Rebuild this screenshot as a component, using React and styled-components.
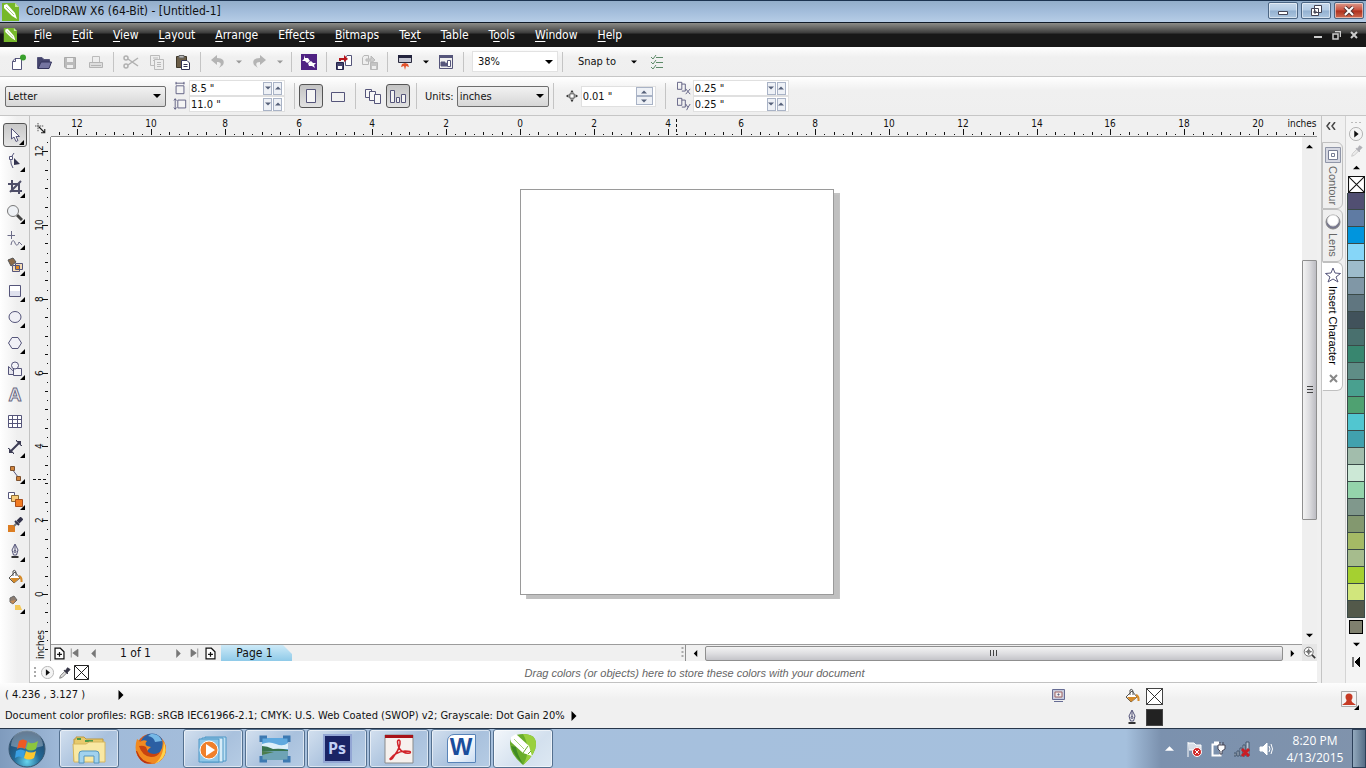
import React from "react";
import styled, { createGlobalStyle, css } from "styled-components";

const INCH = 36.9;

const GlobalStyle = createGlobalStyle`
  * {
    box-sizing: border-box;
  }
  body {
    margin: 0;
    background: #f0f0f0;
    color: #111;
    font-family: "DejaVu Sans Condensed", "DejaVu Sans", sans-serif;
    font-size: 11px;
  }
  button, input, select {
    font: inherit;
    color: inherit;
    margin: 0;
    padding: 0;
    border: 0;
    background: none;
    border-radius: 0;
  }
  svg {
    display: block;
    flex: none;
  }
`;

const Window = styled.div`
  display: flex;
  flex-direction: column;
  min-height: 100vh;
`;

const TitleBar = styled.header`
  display: flex;
  align-items: center;
  height: 23px;
  padding: 0 2px 0 1px;
  gap: 7px;
  border-top: 1px solid #1c3350;
  border-bottom: 1px solid #101a28;
  background: linear-gradient(#93aeca, #a3bddb 50%, #b6cde6);
`;

const Title = styled.h1`
  flex: 1;
  margin: 0;
  font-size: 12px;
  font-weight: normal;
  line-height: 18px;
  padding-bottom: 2px;
`;

const WindowButtons = styled.div`
  display: flex;
  align-self: flex-start;
  gap: 3px;
  padding-top: 1px;
`;

const WindowButton = styled.button`
  display: flex;
  align-items: center;
  justify-content: center;
  width: 30px;
  height: 17px;
  border: 1px solid #4c6684;
  border-radius: 2px;
  box-shadow: inset 0 0 0 1px rgba(255, 255, 255, 0.5);
  background: ${(p) =>
    p.$close
      ? "linear-gradient(#dc9a8c, #c9513f 48%, #ae2f1c 52%, #cf6a50)"
      : "linear-gradient(#c6d8eb, #b2cae3 48%, #92b0d0 52%, #aec7e0)"};
`;

const MenuBar = styled.nav`
  display: flex;
  align-items: center;
  height: 24px;
  padding: 0 8px 0 3px;
  background: linear-gradient(#8c8c88, #5c5c5a 26%, #3a3a3a 42%, #181818 46%, #181818);
  color: #fff;
`;

const Menus = styled.div`
  display: flex;
  flex: 1;
  padding-left: 7px;
`;

const MenuButton = styled.button`
  padding: 0 10px;
  font-size: 12px;
  line-height: 22px;
  u {
    text-underline-offset: 2px;
  }
`;

const ChildButtons = styled.div`
  display: flex;
  gap: 9px;
  color: #ddd;
`;

const PlainButton = styled.button`
  display: flex;
  align-items: center;
  justify-content: center;
`;

const Toolbar = styled.div`
  display: flex;
  align-items: center;
  height: ${(p) => p.$height};
  padding: 0 5px;
  border-bottom: 1px solid #c6c6c6;
  background: linear-gradient(#fff, #f0f0f0 35%, #efefef);
`;

const ToolbarButton = styled.button`
  display: flex;
  align-items: center;
  justify-content: center;
  width: ${(p) => (p.$narrow ? "15px" : "26px")};
  height: 24px;
  ${(p) =>
    p.$pressed &&
    css`
      width: 24px;
      margin-right: 2px;
      border: 1px solid #555;
      border-radius: 3px;
      background: linear-gradient(#c4c4c4, #e2e2e2);
    `}
`;

const Separator = styled.span`
  width: 1px;
  height: ${(p) => p.$height || "20px"};
  margin: 0 4px;
  background: #c4c4c4;
`;

const SelectBox = styled.span`
  display: flex;
  align-items: center;
  width: ${(p) => p.$width};
  height: 21px;
  margin-left: ${(p) => (p.$flat ? "4px" : "0")};
  padding-right: 4px;
  border: 1px solid ${(p) => (p.$flat ? "#e2e2e2" : "#6e6e6e")};
  border-radius: ${(p) => (p.$flat ? "0" : "2px")};
  background: ${(p) => (p.$flat ? "#fff" : "linear-gradient(#f2f2f2, #d6d6d6)")};
  select {
    flex: 1;
    min-width: 0;
    padding-left: ${(p) => (p.$flat ? "5px" : "2px")};
    appearance: none;
    outline: 0;
  }
`;

const Fields = styled.div`
  display: flex;
  flex-direction: column;
  margin: 0 5px 0 7px;
`;

const Field = styled.label`
  display: flex;
  align-items: center;
  gap: 2px;
`;

const NumberBox = styled.span`
  display: flex;
  align-items: center;
  width: ${(p) => p.$width};
  height: ${(p) => (p.$tall ? "21px" : "16px")};
  padding-right: 2px;
  border: 1px solid #e0e0e0;
  background: #fff;
  input {
    flex: 1;
    min-width: 0;
    padding-left: 1px;
    outline: 0;
  }
`;

const SpinButtons = styled.span`
  display: flex;
  flex-direction: ${(p) => (p.$stacked ? "column" : "row")};
  gap: ${(p) => (p.$stacked ? "0" : "1px")};
  button {
    display: flex;
    align-items: center;
    justify-content: center;
    width: ${(p) => (p.$stacked ? "17px" : "9px")};
    height: ${(p) => (p.$stacked ? "9px" : "13px")};
    border: 1px solid #a9b3c6;
    background: #eef1f6;
  }
`;

const TextButton = styled.button`
  display: flex;
  align-items: center;
  gap: 15px;
  margin: 0 7px 0 11px;
`;

const UnitsLabel = styled.label`
  display: flex;
  align-items: center;
  gap: 3px;
  margin-left: 4px;
`;

const Main = styled.main`
  display: flex;
  flex: 1;
`;

const Toolbox = styled.aside`
  display: flex;
  flex-direction: column;
  width: 30px;
  padding: 7px 0 0 3px;
  border-right: 1px solid #c2c2c2;
  background: linear-gradient(to right, #fff, #efefef 60%);
`;

const ToolButton = styled.button`
  position: relative;
  display: flex;
  align-items: center;
  justify-content: center;
  width: 24px;
  height: 24px;
  margin-bottom: 2px;
  ${(p) =>
    p.$pressed &&
    css`
      border: 1px solid #555;
      border-radius: 3px;
      background: linear-gradient(#c8c8c8, #e4e4e4);
    `}
  ${(p) =>
    p.$flyout &&
    css`
      &::after {
        content: "";
        position: absolute;
        right: 2px;
        bottom: 1px;
        border-left: 5px solid transparent;
        border-bottom: 5px solid #000;
      }
    `}
`;

const Document = styled.section`
  display: flex;
  flex: 1;
  min-width: 0;
  flex-direction: column;
`;

const DocumentGrid = styled.div`
  display: grid;
  flex: 1;
  grid-template-columns: 21px 1fr 19px;
  grid-template-rows: 21px 1fr 17px;
  min-height: 545px;
`;

const RulerCorner = styled.div`
  display: flex;
  align-items: center;
  justify-content: center;
  padding-top: 4px;
`;

const TopRuler = styled.div`
  grid-column: 2 / 4;
  overflow: hidden;
  border-bottom: 1px solid #8a8a8a;
  margin-right: 4px;
  svg {
    width: 100%;
    height: 20px;
  }
`;

const SideRuler = styled.div`
  position: relative;
  grid-row: 2 / 4;
  grid-column: 1;
  overflow: hidden;
  border-right: 1px solid #8a8a8a;
  /* keeps the long tick drawing from stretching the grid row */
  contain: size;
  svg {
    width: 20px;
    height: 100%;
  }
  span {
    position: absolute;
    left: 4px;
    bottom: 2px;
    font-size: 10px;
    line-height: 14px;
    writing-mode: vertical-rl;
    transform: rotate(180deg);
  }
`;

const RulerText = styled.text`
  font-size: 10px;
  text-anchor: middle;
  fill: #111;
`;

const Canvas = styled.div`
  position: relative;
  overflow: hidden;
  background: #fff;
`;

const Page = styled.div`
  position: absolute;
  left: 469px;
  top: 52px;
  width: 314px;
  height: 406px;
  border: 1px solid #9a9a9a;
  background: #fff;
  box-shadow: 6px 5px 0 -1px #c0c0c0, 6px 4px 0 0 #c4c4c4;
`;

const VerticalScroll = styled.div`
  display: flex;
  flex-direction: column;
  align-items: center;
  justify-content: space-between;
  width: 15px;
  padding: 5px 0;
  background: #efefef;
`;

const ScrollTrackV = styled.div`
  display: flex;
  flex: 1;
  flex-direction: column;
  width: 15px;
`;

const VerticalThumb = styled.div`
  display: flex;
  align-items: center;
  justify-content: center;
  width: 15px;
  height: 260px;
  margin-top: 110px;
  border: 1px solid #8f8f8f;
  border-radius: 1px;
  background: linear-gradient(to right, #f3f3f3, #dcdcdf 50%, #bcbcc2);
`;

const Corner = styled.div`
  display: flex;
  align-items: center;
  justify-content: center;
  width: 15px;
  background: #e6e6e6;
`;

const BottomBar = styled.div`
  display: flex;
  min-width: 0;
  border-top: 1px solid #9c9c9c;
`;

const PageNav = styled.div`
  display: flex;
  align-items: center;
  justify-content: space-between;
  width: 635px;
  border-right: 1px solid #8f8f8f;
`;

const NavButtons = styled.div`
  display: flex;
  align-items: center;
  height: 16px;
  padding-left: 1px;
`;

const NavButton = styled.button`
  display: flex;
  align-items: center;
  justify-content: center;
  width: ${(p) => (p.$wide ? "18px" : "14px")};
  height: 16px;
`;

const PageCount = styled.span`
  width: 67px;
  text-align: center;
  font-size: 12px;
`;

const PageTab = styled.button`
  width: 71px;
  height: 16px;
  margin-left: 2px;
  padding-right: 4px;
  font-size: 12px;
  line-height: 14px;
  background: linear-gradient(#cdeaf8, #8fcae8);
  clip-path: polygon(0 0, 62px 0, 100% 9px, 100% 100%, 0 100%);
`;

const HorizontalScroll = styled.div`
  display: flex;
  flex: 1;
  align-items: center;
  background: #f0f0f0;
`;

const HorizontalThumb = styled.div`
  display: flex;
  flex: 1;
  align-items: center;
  justify-content: center;
  height: 15px;
  border: 1px solid #8f8f8f;
  border-radius: 2px;
  background: linear-gradient(#f3f3f3, #dedee1 50%, #c4c4c9);
`;

const ScrollArrow = styled.button`
  display: flex;
  align-items: center;
  justify-content: center;
  width: ${(p) => (p.$down ? "15px" : "19px")};
  height: 8px;
`;

const ColorStrip = styled.div`
  display: flex;
  align-items: center;
  height: 22px;
  margin-right: 4px;
  padding: 2px 0 0 3px;
  gap: 3px;
  border-bottom: 1px solid #c2c2c2;
  background: #fff;
  p {
    flex: 1;
    margin: 0 20px 0 0;
    text-align: center;
    color: #666;
    font-family: "Liberation Sans", sans-serif;
    font-size: 11px;
    font-style: italic;
  }
`;

const Dockers = styled.aside`
  display: flex;
  flex-direction: column;
  width: 25px;
  border-left: 1px solid #c4c4c4;
  border-right: 1px solid #d4d4d4;
`;

const CollapseButton = styled(PlainButton)`
  width: 18px;
  height: 20px;
  margin-bottom: 6px;
`;

const DockerTab = styled.button`
  display: flex;
  flex-direction: column;
  align-items: center;
  width: 21px;
  height: ${(p) => p.$height};
  padding: 4px 0 0 1px;
  gap: 3px;
  border: 1px solid #c0c0c0;
  border-left-color: ${(p) => (p.$active ? "#fff" : "#c0c0c0")};
  border-radius: 0 6px 6px 0;
  background: ${(p) => (p.$active ? "#fff" : "#efefef")};
  color: ${(p) => (p.$active ? "#000" : "#666")};
  font-family: "Liberation Sans", sans-serif;
  font-size: 11px;
  line-height: 14px;
  span {
    writing-mode: vertical-rl;
  }
  svg:last-child {
    margin-top: 6px;
  }
`;

const Palette = styled.aside`
  display: flex;
  flex-direction: column;
  align-items: center;
  width: 20px;
  padding: 4px 0 0;
  background: #f4f4f4;
`;

const PaletteButton = styled(PlainButton)`
  width: 18px;
  height: 17px;
`;

const Swatch = styled.button`
  width: 18px;
  height: 17px;
  border: 1px solid #3a4a48;
  border-top-width: 0;
  background: ${(p) => p.$color};
`;

const CurrentSwatch = styled.button`
  width: 14px;
  height: 14px;
  margin: 2px 0;
  border: 1px solid #000;
  background: #7f806e;
`;

const StatusBar = styled.footer`
  display: flex;
  justify-content: space-between;
  height: 45px;
  padding: 0 5px;
  background: linear-gradient(#fdfdfd, #f0f0f0 35%);
`;

const StatusText = styled.div`
  display: flex;
  flex-direction: column;
  padding-top: 1px;
  line-height: 21px;
`;

const StatusLine = styled.div`
  display: flex;
  align-items: center;
  gap: ${(p) => p.$gap};
`;

const StatusRight = styled.div`
  display: flex;
  align-items: flex-start;
  padding-top: 4px;
`;

const FillInfo = styled.div`
  display: grid;
  grid-template-columns: 18px 18px;
  grid-template-rows: 18px 18px;
  align-items: center;
  gap: 3px 4px;
  margin: 0 173px 0 58px;
`;

const ColorBox = styled.span`
  width: 17px;
  height: 17px;
  border: 1px solid #444;
  background: ${(p) => p.$color};
`;

const Taskbar = styled.footer`
  display: flex;
  align-items: center;
  height: 40px;
  border-top: 1px solid #27364a;
  background: linear-gradient(
    to right,
    #7f9bbd,
    #9fb9d8 60px,
    #a7c0dd 300px,
    #a5c0dd calc(100% - 240px),
    #7b91ae calc(100% - 205px),
    #8093ac
  );
`;

const StartButton = styled(PlainButton)`
  width: 59px;
  height: 38px;
  padding-right: 5px;
`;

const TaskButton = styled.button`
  display: flex;
  align-items: center;
  justify-content: center;
  width: 60px;
  height: 39px;
  margin-right: 2px;
  ${(p) =>
    p.$open &&
    css`
      border: 1px solid #54708f;
      border-radius: 3px;
      box-shadow: inset 0 0 0 1px rgba(255, 255, 255, 0.55);
      background: ${p.$active
        ? "linear-gradient(135deg, #f3f7fb, #d3e0ee 60%, #dde8f2)"
        : "linear-gradient(135deg, #d3e0ef, #a9c1dd 55%, #b6cce4)"};
    `}
`;

const PsTile = styled.span`
  width: 29px;
  height: 29px;
  border: 2px solid #93a6d4;
  background: #1a2465;
  color: #c2d1f5;
  font: bold 16px/24px "Open Sans", sans-serif;
`;

const WordTile = styled.span`
  width: 29px;
  height: 29px;
  border: 1px solid #5783b8;
  border-radius: 7px 1px 1px 1px;
  background: linear-gradient(135deg, #fff 40%, #c9dcf2);
  color: #1b4e9c;
  font: bold 24px/24px "Liberation Sans", sans-serif;
`;

const Tray = styled.div`
  display: flex;
  align-items: center;
  gap: 8px;
  margin-left: auto;
  margin-right: 8px;
  & > svg:first-child {
    margin-right: 4px;
  }
`;

const Clock = styled.time`
  width: 66px;
  margin-right: 4px;
  color: #fff;
  font-family: "Open Sans", sans-serif;
  font-size: 12px;
  line-height: 17px;
  text-align: center;
`;

const ShowDesktop = styled.button`
  width: 14px;
  height: 39px;
  border: 1px solid #2d4059;
  background: linear-gradient(to right, #93a9bd, #566d86);
`;

function Svg({ w = 16, h = w, box, children, ...rest }) {
  return (
    <svg width={w} height={h} viewBox={box || `0 0 ${w} ${h}`} fill="none" stroke="#55557a" aria-hidden="true" {...rest}>
      {children}
    </svg>
  );
}

function Caret({ dir = "down", size = 7, color = "#000" }) {
  const paths = {
    down: "M0 2H8L4 6Z",
    up: "M0 6H8L4 2Z",
    left: "M6 0V8L2 4Z",
    right: "M2 0V8L6 4Z",
  };
  return (
    <Svg w={size} box="0 0 8 8" stroke="none">
      <path d={paths[dir]} fill={color} />
    </Svg>
  );
}

function CorelLogo({ size = 18 }) {
  return (
    <Svg w={size} box="0 0 18 18" stroke="none">
      <path d="M1 0H14L18 4V18H1Z" fill="#76b82a" />
      <path d="M14 0L18 4H14Z" fill="#c7e59f" />
      <path d="M3 2L6 1L14 10L16 16L11 13L3 5Z" fill="#fff" />
      <path d="M5 4L13 12" stroke="#a9d378" />
    </Svg>
  );
}

const bucket = (
  <>
    <path d="M2 9L8 3L13 9L7 14Z" fill="#fff" stroke="#555" />
    <path d="M3 9H13L7 14Z" fill="#d58a29" stroke="none" />
    <path d="M6 7V2Q8 0 9 3V7" stroke="#555" />
    <path d="M12 7Q15 8 14.5 13" stroke="#d58a29" strokeWidth="2" />
  </>
);

const pen = (
  <>
    <path d="M8 1L11 7L9.5 12H6.5L5 7Z" fill="#eee" />
    <path d="M8 2V8" />
    <circle cx="8" cy="8.5" r="1" />
    <path d="M4.5 14H11.5" stroke="#333" strokeWidth="2" />
  </>
);

const dropper = (
  <>
    <path d="M3 14L4 11L9 6L11 8L6 13Z" fill="#ddd" stroke="#777" />
    <path d="M8 5L10 5L12 2L15 4L12 7L12 9Z" fill="#334" stroke="#334" />
  </>
);

const icons = {
  new: (
    <>
      <path d="M2.5 7.5L5 4.500H11.5V15.5H2.5Z" fill="#fff" />
      <path d="M2.5 7.5H5.5V4.5" />
      <circle cx="13" cy="3.5" r="3" fill="#39a02c" stroke="none" />
    </>
  ),
  open: (
    <>
      <path d="M1.5 14.5V3.5H6L8 5.5H13.5V8" fill="#44446c" />
      <path d="M2 14.5L5 8H15.5L13 14.5Z" fill="#7474a0" stroke="#33335c" />
    </>
  ),
  save: (
    <>
      <path d="M2.5 3.5H13.5V14.5H4L2.5 13Z" fill="#bbb" stroke="#aaa" />
      <path d="M5 4H11V8H5ZM5 11H11V14H5Z" fill="#eee" stroke="none" />
    </>
  ),
  print: (
    <>
      <path d="M4.5 8V2.5H11.5V8" fill="#eee" stroke="#bbb" />
      <path d="M1.5 8.5H14.5V13.5H1.5ZM3 11.5H13" fill="#ddd" stroke="#b4b4b4" />
    </>
  ),
  cut: (
    <g stroke="#b0b0b0" strokeWidth="1.5">
      <path d="M5 5L15 12M5 11L15 4" />
      <circle cx="3" cy="4" r="2" />
      <circle cx="3" cy="12" r="2" />
    </g>
  ),
  copy: (
    <g stroke="#bbb">
      <path d="M1.5 1.5H10.5V11.5H1.5ZM4 4H9M4 6.5H8" fill="#eee" />
      <path d="M5.5 5.5H14.5V15.5H5.5ZM8 8.5H12M8 10.5H12M8 12.5H12" fill="#eee" />
    </g>
  ),
  paste: (
    <>
      <path d="M1.5 2.5H11.5V13.5H1.5Z" fill="#6b5d47" stroke="#3f382b" />
      <path d="M4 1.5H9V4H4Z" fill="#bbb" stroke="#666" />
      <path d="M6.5 6.5H12L14.5 9V15.5H6.5ZM8.5 10.5H12.5M8.5 12.5H12.5" fill="#fff" stroke="#333355" />
    </>
  ),
  undo: <path d="M1 6L7 1V4C13 4 15 7 13 11L9 14C12 10 11 8 7 8V11Z" fill="#b4b4b4" stroke="none" />,
  redo: <path d="M15 6L9 1V4C3 4 1 7 3 11L7 14C4 10 5 8 9 8V11Z" fill="#b4b4b4" stroke="none" />,
  connect: (
    <>
      <path d="M0 0H16V16H0Z" fill="#4f2283" stroke="none" />
      <path d="M3 1L4 4L7 4L9 7L6 9L4 7L1 7L3 5Z" fill="#fff" stroke="none" />
      <path d="M10 7L12 9L15 9L13 11L14 14L11 12L8 12L7 9Z" fill="#fff" stroke="none" />
    </>
  ),
  import: (
    <>
      <path d="M9.500 3.5L11 1.5H15.5V11.5H9.5Z" fill="#fff" />
      <path d="M.5 8.5H7.5V15.5H.5Z" fill="#44446c" stroke="#22224a" />
      <path d="M2 12H6V15H2Z" fill="#fff" stroke="none" />
      <path d="M3 7V4H8V1L12 5L8 8V6H5V7Z" fill="#b8151c" stroke="none" />
    </>
  ),
  export: (
    <g stroke="#b8b8b8">
      <path d="M.5 3.5L2 1.5H6.5V10.5H.5Z" fill="#eee" />
      <path d="M8.5 8.5H15.5V15.5H8.5Z" fill="#c4c4c4" />
      <path d="M10 12H14V15H10Z" fill="#eee" stroke="none" />
      <path d="M4 7V5H9V2L13 6L9 9V7Z" fill="#ccc" />
    </g>
  ),
  launcher: (
    <>
      <path d="M1.500 1.5H14.5V8.5H1.5Z" fill="#c4c6d2" stroke="#2b2b3f" />
      <path d="M1 1H15V4H1Z" fill="#22223c" stroke="none" />
      <path d="M5 10L8 9L11 10L12 13L9 12L8 16L7 12L4 13Z" fill="#e2512b" stroke="none" />
    </>
  ),
  welcome: (
    <>
      <path d="M1.5 1.5H14.5V14.5H1.5Z" fill="#eee" />
      <path d="M1 1H15V4H1Z" fill="#55557a" stroke="none" />
      <path d="M3 8H7V10L9 9V12H3Z" fill="#55557a" />
      <path d="M9.5 6.5H12.5V12.5H9.5Z" fill="#fff" />
    </>
  ),
  options: (
    <g stroke="#5d8a68">
      <path d="M2 3L4 5L7 1M2 8L4 10L7 6M2 13L4 15L7 11" />
      <path d="M7 3.5H14M7 8.5H14M7 13.5H14" />
    </g>
  ),
  portrait: <path d="M3.5 1.5H12.5V14.5H3.5Z" fill="#f6f6f6" />,
  landscape: <path d="M1.5 4.5H14.5V13.5H1.5Z" fill="#f2f2f2" />,
  allPages: (
    <g fill="#f6f6f6">
      <path d="M.5 1.5H6.5V9.5H.5Z" />
      <path d="M4.5 3.5H10.5V12.5H4.5Z" />
      <path d="M9.5 6.5H15.5V15.5H9.5Z" />
    </g>
  ),
  currentPage: (
    <path d="M.5 2.5H4.5V14.5H.5ZM6.5 9.5H9.5V14.5H6.5ZM11.5 6.5H15.5V14.5H11.5Z" fill="#f2f2f2" />
  ),
  nudge: (
    <>
      <path d="M5.5 5.5H10.5V10.5H5.5Z" fill="#fff" stroke="#333" />
      <path d="M8 1L10 4H6ZM8 15L10 12H6ZM1 8L4 6V10ZM15 8L12 6V10Z" fill="#333" stroke="none" />
    </>
  ),
  width: <path d="M3.5 5.5H12.5V14.5H3.5ZM3 2.5H13M3.5 1V4M12.5 1V4" fill="#f4f4f4" />,
  height: <path d="M5.5 3.5H14.5V12.5H5.5ZM2.5 2V14M1 4L2.5 2L4 4M1 12L2.5 14L4 12" fill="#f4f4f4" />,
  dupX: <path d="M.5 1.5H5.5V9.5H.5ZM5.5 3.5H9.5V11.5H5.5M10 9L15 15M15 9L10 15" />,
  dupY: <path d="M.5 1.5H5.5V9.5H.5ZM5.5 3.5H9.5V11.5H5.5M10 8L12.5 12L15 8M12.5 12L11 15" />,
  pick: <path d="M4.5 1.5V12L7 10L9 14.5L11 13.5L9 9.5H12.5Z" fill="#f8f8f8" />,
  shape: (
    <>
      <path d="M7 0Q1 7 6 15" />
      <path d="M2.500 3.5H5.5V6.5H2.5Z" fill="#fff" />
      <path d="M7 5V12L13 11Z" fill="#33334f" stroke="none" />
    </>
  ),
  crop: <path d="M5 1V12H15M1 5H12V15M3 13L14 2" strokeWidth="2" stroke="#4e4e68" />,
  zoom: (
    <>
      <path d="M10 10L15 15" stroke="#444" strokeWidth="3" />
      <circle cx="6" cy="6" r="5.5" fill="#eef1f5" stroke="#777" />
    </>
  ),
  freehand: <path d="M4.5 0V8M.5 4.500H8M4 14C5 8 7 9 8 12S11 15 12 11L15 14" stroke="#6c6c88" />,
  smartFill: (
    <>
      <path d="M1 3L6 1L9 5L4 9Z" fill="#8b6a4a" stroke="#555" />
      <path d="M5.5 8.5H12.5V14.5H5.5ZM8.5 6.5H15.5V12.5H8.5Z" fill="#f4dbb6" />
      <path d="M9 9H12V12H9Z" fill="#e28a24" stroke="none" />
    </>
  ),
  rectangle: (
    <>
      <path d="M2.5 2.5H13.5V13.5H2.5Z" fill="#fff" />
      <path d="M3 8H13V13H3Z" fill="#dfe1ee" stroke="none" />
    </>
  ),
  ellipse: <ellipse cx="8" cy="8" rx="6" ry="5.5" fill="#f0f0f6" />,
  polygon: <path d="M1.5 8L5 2.5H11L14.5 8L11 13.5H5Z" fill="#f0f0f6" />,
  shapes: (
    <>
      <path d="M1.5 5.5L10 13.5H1.5Z" fill="#e6e6ee" />
      <path d="M6.5 7.5H14.5V14.5H6.5Z" fill="#f4f4f8" />
      <circle cx="8" cy="4.5" r="3.5" fill="#f4f4f8" />
    </>
  ),
  table: <path d="M1.5 2.5H14.5V14.5H1.5ZM1.5 6.5H14.5M1.5 10.5H14.5M5.5 2.5V14.5M10.5 2.5V14.5" fill="#fff" />,
  dimension: (
    <>
      <path d="M3 13L13 3" stroke="#3c3c54" strokeWidth="2" />
      <path d="M1 9L7 15M9 1L15 7" stroke="#3c3c54" />
      <path d="M2 14V9L7 14ZM14 2V7L9 2Z" fill="#3c3c54" stroke="none" />
    </>
  ),
  connector: (
    <>
      <path d="M5 4L11 12" />
      <path d="M3.5 1.5H7.5V5.500H3.5ZM9.5 11.5H13.5V15.5H9.500Z" fill="#d0843c" stroke="#7c5130" />
    </>
  ),
  blend: (
    <>
      <path d="M1.5 1.5H7.5V7.5H1.5Z" fill="#fff" />
      <path d="M4.5 4.5H11.5V10.5H4.5Z" fill="#f7cc7a" stroke="#8d6b35" />
      <path d="M8.5 8.5H15.5V15.5H8.5Z" fill="#f17b21" stroke="#a94d1b" />
    </>
  ),
  eyedropper: (
    <>
      <path d="M1 8H8V15H1Z" fill="#dc7d22" stroke="none" />
      <path d="M7 9L11 5" stroke="#777" strokeWidth="2" />
      <path d="M8 4L12 8" stroke="#33334b" strokeWidth="2" />
      <path d="M11 5L15 1" stroke="#33334b" strokeWidth="4" />
    </>
  ),
  outline: pen,
  fill: bucket,
  interactiveFill: (
    <>
      <path d="M3 3L7 1L10 5L6 9L3 7Z" fill="#8c7c70" stroke="#666" />
      <path d="M3 6L9 5L6 9Z" fill="#c58a55" stroke="none" />
      <path d="M8 10H13L15 15H8Z" fill="#f4c95b" stroke="none" />
    </>
  ),
  dropper,
  contour: (
    <>
      <path d="M.5.5H15.5V15.5H.5Z" fill="#d6d8e2" stroke="#9096a8" />
      <path d="M3.5 3.5H12.5V12.5H3.5ZM6.5 6.5H9.5V9.5H6.5Z" fill="#fff" stroke="#777d94" />
    </>
  ),
  lens: (
    <>
      <circle cx="8" cy="8" r="7" fill="#77778e" stroke="#888" />
      <circle cx="8" cy="6.5" r="5.5" fill="#fff" stroke="#ddd" />
    </>
  ),
  star: <path d="M8 1L10 6L15.5 6.5L11 10L13 15L8 12L3 15L5 10L.5 6.5L6 6Z" fill="#fff" />,
  addPage: <path d="M2.5 1.5H9L13.5 6V14.5H2.5ZM5 9H11M8 6V12" stroke="#111" fill="#fff" strokeWidth="1.5" />,
  first: <path d="M3 2V14M12 3V13L5 8Z" fill="#777" stroke="#777" />,
  last: <path d="M13 2V14M4 3V13L11 8Z" fill="#777" stroke="#777" />,
  navigator: (
    <>
      <circle cx="7" cy="7" r="5.5" stroke="#555" fill="#fff" />
      <circle cx="7" cy="7" r="2" stroke="#555" />
      <path d="M11 11L15 15" stroke="#333" strokeWidth="2" />
      <path d="M7 3V11M3 7H11" stroke="#555" />
    </>
  ),
  proof: (
    <>
      <path d="M2.5 2.5H14.5V12.5H2.5Z" fill="#c7cbdc" stroke="#666c94" />
      <path d="M4 14.5H13" stroke="#666c94" />
      <path d="M5 5H12V10H5Z" fill="#eee" stroke="#a16464" />
      <path d="M8 7H9V8H8Z" />
    </>
  ),
  user: (
    <>
      <path d="M.5.5H15.5V15.5H.5Z" fill="#f4f4f4" stroke="#aaa" />
      <circle cx="8" cy="6" r="3.5" fill="#c63b25" stroke="none" />
      <path d="M1 14L5 11L6 8H10L11 11L15 14Z" fill="#c63b25" stroke="none" />
    </>
  ),
  cross: <path d="M0 0L16 16M16 0L0 16" stroke="#222" />,
  noColor: <path d="M.5.5H15.5V15.5H.5ZM1 1L15 15M15 1L1 15" fill="#fff" stroke="#111" />,
  origin: (
    <>
      <path d="M4 0V12M0 4H12" strokeDasharray="2 1" stroke="#222" />
      <path d="M5 5L13 13M13 8V13H8" stroke="#222" strokeWidth="1.500" />
    </>
  ),
  play: (
    <>
      <circle cx="8" cy="8" r="7.5" fill="#f4f4f4" stroke="#aaa" />
      <path d="M6 4V12L11 8Z" fill="#111" stroke="none" />
    </>
  ),
};

function Icon({ name, size = 16, ...rest }) {
  return (
    <Svg w={size} box="0 0 16 16" {...rest}>
      {icons[name]}
    </Svg>
  );
}

function Tick({ at, vertical }) {
  // at counts quarter inches away from the origin
  const major = at % 8 === 0;
  const length = major ? 6 : at % 2 === 0 ? 3 : 1;
  const pos = Math.round((at / 4) * INCH);
  const label = Math.abs(at / 4);
  if (vertical) {
    const y = 457 - pos;
    return (
      <>
        <path d={`M${18 - length} ${y + 0.5}H18`} stroke="#111" />
        {major && (
          <RulerText x={9} y={y} transform={`rotate(-90 9 ${y})`} dy="4">
            {label}
          </RulerText>
        )}
      </>
    );
  }
  const x = 469 + pos;
  return (
    <>
      <path d={`M${x + 0.5} ${19 - length}V19`} stroke="#111" />
      {major && (
        <RulerText x={x} y={11}>
          {label}
        </RulerText>
      )}
    </>
  );
}

function Rulers() {
  const across = [];
  for (let i = -50; i <= 86; i++) across.push(i);
  const down = [];
  for (let i = -6; i <= 49; i++) down.push(i);
  return (
    <>
      <RulerCorner>
        <Icon name="origin" size={12} />
      </RulerCorner>
      <TopRuler>
        <svg aria-hidden="true">
          {across.map((i) => (
            <Tick key={i} at={i} />
          ))}
          <path d="M625.5 3V19" stroke="#111" strokeDasharray="3 2" />
          <RulerText x="1251" y="11">
            inches
          </RulerText>
        </svg>
      </TopRuler>
      <SideRuler>
        <svg aria-hidden="true">
          {down.map((i) => (
            <Tick key={i} at={i} vertical />
          ))}
          <path d="M3 342.5H18" stroke="#111" strokeDasharray="3 2" />
        </svg>
        <span>inches</span>
      </SideRuler>
    </>
  );
}

function Spinners({ stacked, name }) {
  const color = "#56617a";
  return (
    <SpinButtons $stacked={stacked}>
      <button aria-label={`${name} ${stacked ? "up" : "down"}`}>
        <Caret dir={stacked ? "up" : "down"} size={6} color={color} />
      </button>
      <button aria-label={`${name} ${stacked ? "down" : "up"}`}>
        <Caret dir={stacked ? "down" : "up"} size={6} color={color} />
      </button>
    </SpinButtons>
  );
}

function NumberField({ name, icon, value, width, tall }) {
  return (
    <Field>
      <Icon name={icon} size={14} />
      <NumberBox $width={width} $tall={tall}>
        <input aria-label={name} defaultValue={value} />
        <Spinners name={name} stacked={tall} />
      </NumberBox>
    </Field>
  );
}

function Select({ name, value, width, flat, id }) {
  return (
    <SelectBox $width={width} $flat={flat}>
      <select id={id} aria-label={name} defaultValue={value}>
        <option>{value}</option>
      </select>
      <Caret size={8} />
    </SelectBox>
  );
}

const menus = [
  ["", "F", "ile"],
  ["", "E", "dit"],
  ["", "V", "iew"],
  ["", "L", "ayout"],
  ["", "A", "rrange"],
  ["Effe", "c", "ts"],
  ["", "B", "itmaps"],
  ["Te", "x", "t"],
  ["", "T", "able"],
  ["T", "o", "ols"],
  ["", "W", "indow"],
  ["", "H", "elp"],
];

const standardItems = [
  "new", "open", "save", "print", "|",
  "cut", "copy", "paste", "|",
  "undo", "v-", "redo", "v-", "|",
  "connect", "|",
  "import", "export", "|",
  "launcher", "v", "welcome", "|",
];

function StandardToolbar() {
  return (
    <Toolbar $height="30px">
      {standardItems.map((item, i) => {
        if (item === "|") return <Separator key={i} />;
        if (item[0] === "v")
          return (
            <ToolbarButton key={i} $narrow aria-label="More">
              <Caret size={6} color={item === "v" ? "#000" : "#999"} />
            </ToolbarButton>
          );
        return (
          <ToolbarButton key={i} aria-label={item}>
            <Icon name={item} />
          </ToolbarButton>
        );
      })}
      <Select name="Zoom" value="38%" width="86px" flat />
      <Separator />
      <TextButton>
        Snap to
        <Caret size={6} />
      </TextButton>
      <ToolbarButton aria-label="Options">
        <Icon name="options" />
      </ToolbarButton>
    </Toolbar>
  );
}

function PropertyBar() {
  return (
    <Toolbar $height="39px">
      <Select name="Page size" value="Letter" width="161px" />
      <Fields>
        <NumberField name="Page width" icon="width" value={'8.5 "'} width="96px" />
        <NumberField name="Page height" icon="height" value={'11.0 "'} width="96px" />
      </Fields>
      <Separator $height="26px" />
      <ToolbarButton $pressed aria-label="Portrait">
        <Icon name="portrait" />
      </ToolbarButton>
      <ToolbarButton aria-label="Landscape">
        <Icon name="landscape" />
      </ToolbarButton>
      <Separator $height="26px" />
      <ToolbarButton aria-label="All pages">
        <Icon name="allPages" />
      </ToolbarButton>
      <ToolbarButton $pressed aria-label="Current page">
        <Icon name="currentPage" />
      </ToolbarButton>
      <Separator $height="26px" />
      <UnitsLabel htmlFor="units">
        Units:
        <Select id="units" name="Units" value="inches" width="92px" />
      </UnitsLabel>
      <Separator $height="26px" />
      <Fields>
        <NumberField name="Nudge" icon="nudge" value={'0.01 "'} width="75px" tall />
      </Fields>
      <Separator $height="26px" />
      <Fields>
        <NumberField name="Duplicate x" icon="dupX" value={'0.25 "'} width="96px" />
        <NumberField name="Duplicate y" icon="dupY" value={'0.25 "'} width="96px" />
      </Fields>
    </Toolbar>
  );
}

const tools = [
  "pick", "shape", "crop", "zoom", "freehand", "smartFill", "rectangle", "ellipse", "polygon", "shapes",
  "text", "table", "dimension", "connector", "blend", "eyedropper", "outline", "fill", "interactiveFill",
];

const ToolLetter = styled.span`
  color: #f4f4f8;
  font: bold 18px/20px "Liberation Sans", sans-serif;
  -webkit-text-stroke: 1px #6a6a84;
`;

function Tools() {
  return (
    <Toolbox>
      {tools.map((tool) => (
        <ToolButton key={tool} aria-label={tool} $pressed={tool === "pick"} $flyout={tool !== "text" && tool !== "table"}>
          {tool === "text" ? <ToolLetter>A</ToolLetter> : <Icon name={tool} />}
        </ToolButton>
      ))}
    </Toolbox>
  );
}

function PageBar() {
  return (
    <BottomBar>
      <PageNav>
        <NavButtons>
          <NavButton aria-label="Add page before">
            <Icon name="addPage" size={13} />
          </NavButton>
          <NavButton $wide aria-label="First page">
            <Icon name="first" size={12} />
          </NavButton>
          <NavButton $wide aria-label="Previous page">
            <Caret dir="left" size={9} color="#777" />
          </NavButton>
          <PageCount>1 of 1</PageCount>
          <NavButton $wide aria-label="Next page">
            <Caret dir="right" size={9} color="#777" />
          </NavButton>
          <NavButton aria-label="Last page">
            <Icon name="last" size={12} />
          </NavButton>
          <NavButton $wide aria-label="Add page after">
            <Icon name="addPage" size={13} />
          </NavButton>
          <PageTab>Page 1</PageTab>
        </NavButtons>
        <Svg w={4} h={12}>
          <path d="M1.5 0V12" stroke="#aaa" strokeWidth="2" strokeDasharray="2 2" />
        </Svg>
      </PageNav>
      <HorizontalScroll>
        <ScrollArrow aria-label="Scroll left">
          <Caret dir="left" />
        </ScrollArrow>
        <HorizontalThumb>
          <Svg w={8} h={6}>
            <path d="M.5 0V6M3.5 0V6M6.5 0V6" stroke="#444" />
          </Svg>
        </HorizontalThumb>
        <ScrollArrow aria-label="Scroll right">
          <Caret dir="right" />
        </ScrollArrow>
      </HorizontalScroll>
    </BottomBar>
  );
}

const colors = [
  "#514f72", "#5f7ba3", "#0095dd", "#86d6f8", "#9dbccb", "#8097a6", "#607680", "#41525b", "#49706e",
  "#38866f", "#5f8d86", "#49a08f", "#4fa171", "#51c6d0", "#41a1ae", "#a2bdac", "#cce8d6", "#94d4ab",
  "#80988c", "#83986f", "#a5ba65", "#a6bc8d", "#a5d030", "#d1e67c", "#53594a",
];

function ColorPalette() {
  return (
    <Palette>
      <Svg w={12} h={5}>
        <path d="M1 2.5H12" stroke="#bbb" strokeDasharray="2 2" />
      </Svg>
      <PaletteButton aria-label="Palette menu">
        <Icon name="play" size={14} />
      </PaletteButton>
      <PaletteButton aria-label="Pick color">
        <Icon name="dropper" size={14} opacity="0.35" />
      </PaletteButton>
      <PaletteButton aria-label="Scroll up">
        <Caret dir="up" />
      </PaletteButton>
      <PaletteButton aria-label="No color">
        <Icon name="noColor" size={17} />
      </PaletteButton>
      {colors.map((color) => (
        <Swatch key={color} $color={color} aria-label={color} />
      ))}
      <CurrentSwatch aria-label="Current color" />
      <PaletteButton aria-label="Scroll down">
        <Caret />
      </PaletteButton>
      <PaletteButton aria-label="Expand">
        <Svg w={8} h={10}>
          <path d="M1 0V10M8 0V10L3 5Z" fill="#000" stroke="#000" />
        </Svg>
      </PaletteButton>
    </Palette>
  );
}

function DockerTabs() {
  return (
    <Dockers>
      <CollapseButton aria-label="Collapse">
        <Svg w={10} h={8}>
          <path d="M4 0L1 4L4 8M9 0L6 4L9 8" stroke="#444" strokeWidth="1.5" />
        </Svg>
      </CollapseButton>
      <DockerTab $height="67px">
        <Icon name="contour" />
        <span>Contour</span>
      </DockerTab>
      <DockerTab $height="53px">
        <Icon name="lens" />
        <span>Lens</span>
      </DockerTab>
      <DockerTab $height="129px" $active>
        <Icon name="star" />
        <span>Insert Character</span>
        <Svg w={9}>
          <path d="M1 1L8 8M8 1L1 8" stroke="#888" strokeWidth="2" />
        </Svg>
      </DockerTab>
    </Dockers>
  );
}

function Status() {
  return (
    <StatusBar>
      <StatusText>
        <StatusLine $gap="31px">
          <span>( 4.236 , 3.127 )</span>
          <Caret dir="right" size={10} />
        </StatusLine>
        <StatusLine $gap="4px">
          <span>Document color profiles: RGB: sRGB IEC61966-2.1; CMYK: U.S. Web Coated (SWOP) v2; Grayscale: Dot Gain 20%</span>
          <Caret dir="right" size={10} />
        </StatusLine>
      </StatusText>
      <StatusRight>
        <Icon name="proof" />
        <FillInfo>
          <Icon name="fill" />
          <ColorBox $color="#fff">
            <Icon name="cross" size={15} />
          </ColorBox>
          <Icon name="outline" />
          <ColorBox $color="#222" />
        </FillInfo>
        <ToolButton $flyout aria-label="Account">
          <Icon name="user" />
        </ToolButton>
      </StatusRight>
    </StatusBar>
  );
}

function StartOrb() {
  return (
    <Svg w={38} stroke="none">
      <defs>
        <radialGradient id="orb" cx="50%" cy="85%" r="80%">
          <stop offset="0" stopColor="#67d5ee" />
          <stop offset="0.45" stopColor="#226895" />
          <stop offset="1" stopColor="#234467" />
        </radialGradient>
      </defs>
      <circle cx="19" cy="19" r="18" fill="url(#orb)" stroke="#38566f" />
      <path d="M3 16A16 16 0 0 1 35 16Q19 21 3 16Z" fill="#fff" opacity="0.3" />
      <path d="M11 11Q15 8 19 11L17 19Q13 16 9 19Z" fill="#ed5a24" />
      <path d="M20 12Q24 15 30 11L28 19Q23 22 18 19Z" fill="#8cc63e" />
      <path d="M8 21Q13 18 17 21L15 28Q11 25 7 28Z" fill="#3aa0e3" />
      <path d="M18 21Q23 24 28 21L26 28Q21 31 16 28Z" fill="#fdc72e" />
    </Svg>
  );
}

function ExplorerIcon() {
  return (
    <Svg w={34} h={30} stroke="none">
      <path d="M2 5H4V3H12L14 5H31V27H2Z" fill="#e8ca6c" stroke="#bd983c" />
      <path d="M5 4H9V6H5ZM13 6H21V8H13Z" fill="#4d9a48" />
      <path d="M22 8H28V10H22Z" fill="#4c93c9" />
      <path d="M1 10H14L17 8H33V28H2Z" fill="#f9e8a3" stroke="#d5b65e" />
      <path d="M7 29V20Q7 17 10 17H24Q27 17 27 20V29H22V22H12V29Z" fill="#a1d2ee" stroke="#5595be" />
    </Svg>
  );
}

function FirefoxIcon() {
  return (
    <Svg w={34} h={34} stroke="none">
      <circle cx="17" cy="17" r="15" fill="#dd5a17" />
      <circle cx="18" cy="13" r="11.5" fill="#2b5fa3" />
      <path d="M14 4Q20 5 21 10L28 9Q25 1 17 2Z" fill="#76b8e6" />
      <path d="M3 7Q5 8 6 10Q9 7 13 9Q10 12 13 14L17 15Q13 18 13 20Q19 26 26 20Q30 15 28 7Q36 18 27 28Q16 36 6 27Q-1 19 3 7Z" fill="#f18a20" />
      <path d="M30 10Q36 26 20 32Q29 27 30 10Z" fill="#fdd24b" />
      <path d="M3 19Q7 30 18 31Q6 34 2 19Z" fill="#b93412" />
      <path d="M5 14Q8 24 17 25Q24 25 26 20Q20 24 14 20L12 15Q9 13 5 14Z" fill="#c8430f" />
    </Svg>
  );
}

function PlayerIcon() {
  return (
    <Svg w={30} h={28} stroke="#4d97c6">
      <path d="M7 2H28V26H7Z" fill="#bfe0f3" />
      <path d="M4 3H25V27H4Z" fill="#d6ecf8" />
      <path d="M1 4H21V27H1Z" fill="#8fc7e8" />
      <circle cx="11" cy="15" r="9" fill="#f0802b" stroke="#fff" />
      <path d="M8 9V21L17 15Z" fill="#fff" stroke="none" />
    </Svg>
  );
}

function PhotosIcon() {
  return (
    <Svg w={32} h={28} stroke="none">
      <path d="M3 3H29V25H3Z" fill="#5fa9df" />
      <path d="M3 9Q10 6 17 9T29 8V14H3Z" fill="#dceffa" />
      <path d="M3 11Q8 11 14 14Q22 13 29 15V17H3Z" fill="#38734f" />
      <path d="M3 16H29V25H3Z" fill="#6ea3b5" />
      <path d="M3 16L15 17L3 20Z" fill="#4b7d4d" />
      <path d="M2 7V2H8M24 2H30V7M30 21V26H24M8 26H2V21" stroke="#3d79b1" strokeWidth="3" fill="none" />
    </Svg>
  );
}

function AcrobatIcon() {
  return (
    <Svg w={30} h={30} stroke="none">
      <path d="M1 1H29V29H1Z" fill="#f6f1ee" stroke="#8b8b8b" />
      <path d="M1 1H29V4H1Z" fill="#a71319" />
      <path d="M15 6Q12 6 15 14Q19 20 26 19Q28 17 21 17Q11 18 6 25Q7 27 10 22Q17 13 16 7Z" stroke="#d1232a" strokeWidth="1.5" />
    </Svg>
  );
}

function BalloonIcon() {
  return (
    <Svg w={32} h={34} stroke="none">
      <path d="M3 12Q3 2 16 2T29 12Q29 22 16 33Q3 22 3 12Z" fill="#6aad2c" />
      <path d="M16 2Q29 2 29 12Q29 22 16 33Q25 18 16 2Z" fill="#99d03f" />
      <path d="M4 14Q7 24 16 32Q10 22 9 15Z" fill="#3f8a24" />
      <path d="M4 5L9 2L22 14L25 24L16 21L4 10Z" fill="#fff" />
      <path d="M7 7L17 17" stroke="#a9d378" />
      <path d="M16 21L21 14M21 22L24 19" stroke="#6aad2c" />
    </Svg>
  );
}

const tasks = [
  { name: "Explorer", icon: <ExplorerIcon />, open: true },
  { name: "Firefox", icon: <FirefoxIcon /> },
  { name: "Media player", icon: <PlayerIcon />, open: true },
  { name: "Photos", icon: <PhotosIcon />, open: true },
  { name: "Photoshop", icon: <PsTile>Ps</PsTile>, open: true },
  { name: "Acrobat", icon: <AcrobatIcon />, open: true },
  { name: "Word", icon: <WordTile>W</WordTile>, open: true },
  { name: "CorelDRAW", icon: <BalloonIcon />, open: true, active: true },
];

function TrayIcons() {
  return (
    <Tray>
      <Caret dir="up" size={9} color="#fff" />
      <Svg w={16} stroke="#fff">
        <path d="M2 1V16M2 2H8L10 4H15V9H3" fill="#fff" fillOpacity="0.7" />
        <circle cx="11" cy="11" r="4.5" fill="#cf2828" />
        <path d="M9 9L13 13M13 9L9 13" />
      </Svg>
      <Svg w={16} stroke="#fff">
        <path d="M2.5 3.5H10.5V14.5H2.5ZM4 1.5H9" strokeWidth="2" />
        <path d="M8 4H15V8L12 10V13H10V10L8 8ZM10 4V1M13 4V1" fill="#fff" stroke="#445" />
      </Svg>
      <Svg w={16} stroke="none">
        <path d="M0 12H2V15H0ZM3 10H5V15H3ZM6 7H8V15H6ZM9 4H11V15H9ZM12 1H15V15H12Z" fill="#b9c4d2" stroke="#44566d" />
        <path d="M8 8L15 15M15 8L8 15" stroke="#c91e25" strokeWidth="3" />
      </Svg>
      <Svg w={16} stroke="#fff">
        <path d="M2 6H5L9 2V14L5 10H2Z" fill="#fff" />
        <path d="M11 5Q13 8 11 11M13 3Q16 8 13 13" />
      </Svg>
    </Tray>
  );
}

function App() {
  return (
    <Window>
      <GlobalStyle />
      <TitleBar>
        <CorelLogo />
        <Title>CorelDRAW X6 (64-Bit) - [Untitled-1]</Title>
        <WindowButtons>
          <WindowButton aria-label="Minimize">
            <Svg w={12} h={8}>
              <path d="M1.5 4.5H10.5V7.5H1.5Z" fill="#fff" stroke="#445" />
            </Svg>
          </WindowButton>
          <WindowButton aria-label="Restore">
            <Svg w={13} h={11}>
              <path d="M4.5.5H11.5V7.5H4.5ZM1.5 3.5H8.5V10.5H1.5ZM4 6H6V8H4Z" fill="#fff" stroke="#445" />
            </Svg>
          </WindowButton>
          <WindowButton $close aria-label="Close">
            <Svg w={12} h={10}>
              <path d="M2 1L10 9M10 1L2 9" stroke="#533" strokeWidth="4" />
              <path d="M2 1L10 9M10 1L2 9" stroke="#fff" strokeWidth="2" />
            </Svg>
          </WindowButton>
        </WindowButtons>
      </TitleBar>
      <MenuBar>
        <CorelLogo size={14} />
        <Menus>
          {menus.map(([before, key, after]) => (
            <MenuButton key={before + key + after}>
              {before}
              <u>{key}</u>
              {after}
            </MenuButton>
          ))}
        </Menus>
        <ChildButtons>
          <PlainButton aria-label="Minimize document">
            <Svg w={9} h={8}>
              <path d="M0 6H8" stroke="#ccc" strokeWidth="2" />
            </Svg>
          </PlainButton>
          <PlainButton aria-label="Restore document">
            <Svg w={9} h={9}>
              <path d="M3 .5H8.5V6M1 3H6V8H1Z" stroke="#ccc" strokeWidth="1.5" />
            </Svg>
          </PlainButton>
          <PlainButton aria-label="Close document">
            <Svg w={8} h={8}>
              <path d="M1 1L7 7M7 1L1 7" stroke="#ccc" strokeWidth="2" />
            </Svg>
          </PlainButton>
        </ChildButtons>
      </MenuBar>
      <StandardToolbar />
      <PropertyBar />
      <Main>
        <Tools />
        <Document>
          <DocumentGrid>
            <Rulers />
            <Canvas>
              <Page />
            </Canvas>
            <VerticalScroll>
              <ScrollArrow $down aria-label="Scroll up">
                <Caret dir="up" />
              </ScrollArrow>
              <ScrollTrackV>
                <VerticalThumb>
                  <Svg w={6} h={8}>
                    <path d="M0 .5H6M0 3.5H6M0 6.5H6" stroke="#444" />
                  </Svg>
                </VerticalThumb>
              </ScrollTrackV>
              <ScrollArrow $down aria-label="Scroll down">
                <Caret />
              </ScrollArrow>
            </VerticalScroll>
            <PageBar />
            <Corner>
              <Icon name="navigator" size={13} />
            </Corner>
          </DocumentGrid>
          <ColorStrip>
            <Svg w={5} h={12}>
              <path d="M2 0V12" stroke="#aaa" strokeWidth="2" strokeDasharray="2 2" />
            </Svg>
            <PlainButton aria-label="Document palette">
              <Icon name="play" size={13} />
            </PlainButton>
            <PlainButton aria-label="Sample color">
              <Icon name="dropper" size={14} />
            </PlainButton>
            <PlainButton aria-label="No color">
              <Icon name="noColor" size={15} />
            </PlainButton>
            <p>Drag colors (or objects) here to store these colors with your document</p>
          </ColorStrip>
        </Document>
        <DockerTabs />
        <ColorPalette />
      </Main>
      <Status />
      <Taskbar>
        <StartButton aria-label="Start">
          <StartOrb />
        </StartButton>
        {tasks.map(({ name, icon, open, active }) => (
          <TaskButton key={name} aria-label={name} $open={open} $active={active}>
            {icon}
          </TaskButton>
        ))}
        <TrayIcons />
        <Clock>
          8:20 PM
          <br />
          4/13/2015
        </Clock>
        <ShowDesktop aria-label="Show desktop" />
      </Taskbar>
    </Window>
  );
}

export default App;
